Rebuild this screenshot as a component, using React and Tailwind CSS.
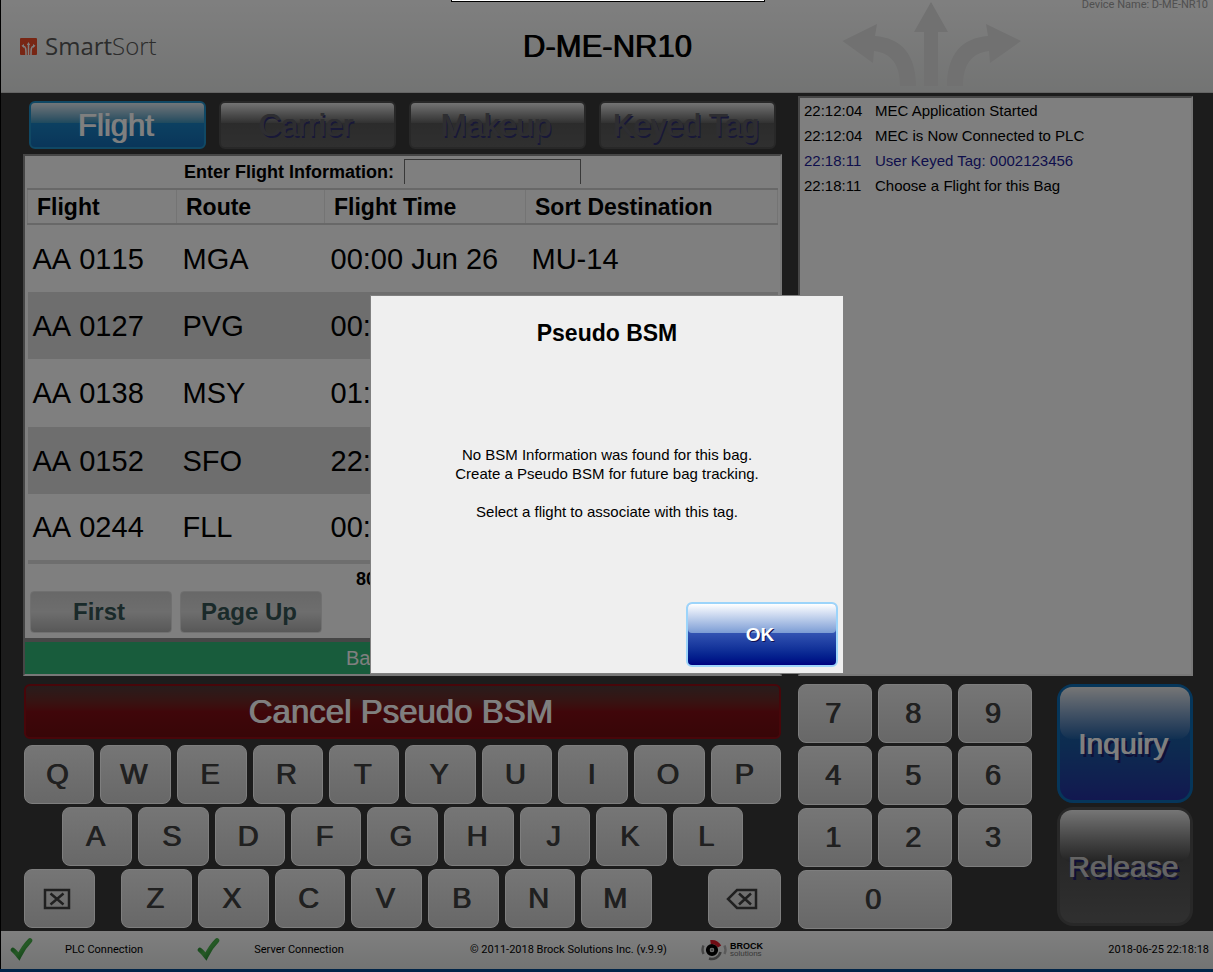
import React from "react";

const FAUX = "[text-shadow:1px_0_0_currentColor]";

const flights = [
  { flight: "AA 0115", route: "MGA", time: "00:00 Jun 26", dest: "MU-14" },
  { flight: "AA 0127", route: "PVG", time: "00:", dest: "" },
  { flight: "AA 0138", route: "MSY", time: "01:", dest: "" },
  { flight: "AA 0152", route: "SFO", time: "22:", dest: "" },
  { flight: "AA 0244", route: "FLL", time: "00:", dest: "" },
];

const log = [
  { time: "22:12:04", text: "MEC Application Started" },
  { time: "22:12:04", text: "MEC is Now Connected to PLC" },
  { time: "22:18:11", text: "User Keyed Tag: 0002123456", user: true },
  { time: "22:18:11", text: "Choose a Flight for this Bag" },
];

function Tab({ label, active }) {
  return (
    <button
      type="button"
      disabled={!active}
      className={
        "relative h-12 flex-1 rounded-md border-2 pr-1 text-[31px] leading-none " +
        (active
          ? "border-[#2090c8] bg-linear-to-b from-[#1e94d0] to-[#146cb4] text-white [text-shadow:1px_0_0_currentColor]"
          : "border-[#505050] bg-linear-to-b from-[#505050] to-[#606060] text-[#5c5c62] [text-shadow:1px_0_0_currentColor,2px_2px_0_#303070]")
      }
    >
      <span
        className={
          "absolute inset-x-0 top-0 h-5 rounded-t-sm bg-linear-to-b " +
          (active ? "from-[#e4ecf2] to-[#3c94bc]" : "from-[#e8e8e8] to-[#646464]")
        }
      />
      <span className="relative">{label}</span>
    </button>
  );
}

function Key({ children, label, className = "flex-1" }) {
  return (
    <button
      type="button"
      aria-label={label}
      className={
        "flex h-[59px] min-w-0 items-center justify-center rounded-lg border border-[#fdfdfd] bg-linear-to-b from-[#ececec] to-[#d0d0d0] pr-1 text-[29px] leading-none text-[#404040] " +
        FAUX +
        " " +
        className
      }
    >
      {children}
    </button>
  );
}

function ActionButton({ label, active }) {
  return (
    <button
      type="button"
      disabled={!active}
      className={
        "relative h-[119px] w-full rounded-2xl border-[3px] pr-1 text-[30px] leading-none " +
        (active
          ? "border-[#0c6cb4] bg-linear-to-b from-[#1470b8] via-[#1a58a0] to-[#2430a0] text-white [text-shadow:1px_0_0_currentColor,3px_3px_0_#202070]"
          : "border-[#505050] bg-linear-to-b from-[#444444] to-[#606060] text-[#c8c8c8] [text-shadow:1px_0_0_currentColor,3px_3px_0_#202070]")
      }
    >
      <span
        className={
          "absolute inset-x-0 top-0 h-[52px] rounded-xl bg-linear-to-b " +
          (active ? "from-[#ececec] to-[#2060a4]" : "from-[#ececec] to-[#484848]")
        }
      />
      <span className="relative">{label}</span>
    </button>
  );
}

function CheckMark({ id }) {
  return (
    <svg width="24" height="24" viewBox="0 0 24 24" aria-hidden="true">
      <defs>
        <linearGradient id={id} x1="0" y1="0" x2="1" y2="1">
          <stop offset="0" stopColor="#187828" />
          <stop offset="0.5" stopColor="#4cb44c" />
          <stop offset="1" stopColor="#187828" />
        </linearGradient>
      </defs>
      <path d="M4 12 C6 13.500 8 16 10 18.500 C12.500 13 16 7.500 21 2.500" fill="none" stroke={`url(#${id})`} strokeWidth="4.6" strokeLinecap="round" />
    </svg>
  );
}

function BrockMark() {
  return (
    <svg width="28" height="22" viewBox="0 0 28 22" aria-hidden="true">
      <circle cx="11" cy="11" r="4.2" fill="none" stroke="#000" strokeWidth="3.8" />
      <circle cx="11" cy="11" r="1.4" fill="#8c8c8c" />
      <path d="M9.500 3 A9 9 0 0 1 18.500 7.500" fill="none" stroke="#e01828" strokeWidth="4" />
      <path d="M19.500 13 A9 9 0 0 1 8 19.500" fill="none" stroke="#787878" strokeWidth="2.6" />
      <path d="M2.500 6.500 A10 10 0 0 0 2.500 15" fill="none" stroke="#8c8c8c" strokeWidth="2.4" />
      <path d="M23.500 6.500 A10 10 0 0 1 23.500 15" fill="none" stroke="#b4b4b4" strokeWidth="2.4" />
    </svg>
  );
}

function Header() {
  return (
    <header className="relative grid h-[93px] grid-cols-3 items-center border-b border-[#c8c8c8] bg-linear-to-b from-white to-[#e6e8e7]">
      <div className="flex items-center gap-2 pl-[19px]">
        <svg width="17" height="17" viewBox="0 0 17 17" aria-hidden="true">
          <rect width="17" height="17" rx="1" fill="#f04c28" />
          <path
            d="M8.500 17 V6 M6 17 C6 11 6 8.500 3 8 M11 17 C11 11 11 8.500 14 8"
            fill="none"
            stroke="#fff"
            strokeWidth="1.5"
          />
          <path d="M6.800 7 L8.500 4 L10.200 7 Z M4 6 L1.500 7.800 L4 10 Z M13 6 L15.500 7.800 L13 10 Z" fill="#fff" />
        </svg>
        <span className="font-['Open_Sans'] text-2xl leading-8 text-[#585858]">
          Smart<span className="font-light">Sort</span>
        </span>
      </div>
      <h1 className={"text-center text-[31px] leading-none text-black " + FAUX}>D-ME-NR10</h1>
      <div className="h-full pl-8">
        <svg width="180" height="92" viewBox="0 0 180 92" aria-hidden="true">
          <g fill="#e2e2e2">
            <path d="M90 2 L107 32 H97 V86 H83 V32 H73 Z" />
            <path d="M1.500 41 L36 24 L34 36 C60 38 75 54 75 86 H59 C59 64 50 53 33 51 L32 63 Z" />
            <path d="M180 41 L145 24 L147 36 C121 38 106 54 106 86 H122 C122 64 131 53 148 51 L149 63 Z" />
          </g>
        </svg>
      </div>
      <p className="absolute right-[5px] top-0 font-[Roboto,sans-serif] text-[11px] leading-[10px] text-[#a0a0a0]">
        Device Name: D-ME-NR10
      </p>
    </header>
  );
}

function FlightPanel() {
  return (
    <section className="mt-[5px] border-2 border-[#8c8c8c] border-r-[#f0f0f0] bg-white px-0.5">
      <div className="flex h-8 items-end justify-start pl-[157px]">
        <label htmlFor="flight-info" className="pb-1 text-lg font-bold leading-6 text-black">
          Enter Flight Information:
        </label>
        <input
          id="flight-info"
          className="mb-1 ml-2.5 h-[25px] w-[177px] border border-b-0 border-[#707070] bg-white px-1 text-base"
        />
      </div>
      <table className="w-full table-fixed border-collapse text-left text-black">
        <colgroup>
          <col className="w-[149px]" />
          <col className="w-[148px]" />
          <col className="w-[201px]" />
          <col />
        </colgroup>
        <thead>
          <tr className="h-[35px] border-y-2 border-[#d0d0d0] text-[23px] leading-6">
            <th className="border-x border-[#e8e8e8] pl-[9px]">Flight</th>
            <th className="border-x border-[#e8e8e8] pl-[9px]">Route</th>
            <th className="border-x border-[#e8e8e8] pl-[9px]">Flight Time</th>
            <th className="border-x border-[#e8e8e8] pl-[9px]">Sort Destination</th>
          </tr>
        </thead>
        <tbody className="border-b-4 border-[#dcdcdc] [font-kerning:none]">
          {flights.map((f) => (
            <tr key={f.flight} className="text-[29px] leading-8 odd:h-[68px] even:h-[67px] even:bg-[#dcdcdc]">
              <td className="pl-[5px]">{f.flight}</td>
              <td className="pl-[6px]">{f.route}</td>
              <td className="whitespace-nowrap pl-[6px]">{f.time}</td>
              <td className="pl-[6px]">{f.dest}</td>
            </tr>
          ))}
        </tbody>
      </table>
      <p className="pl-[329px] pt-[3px] text-lg font-bold leading-6 text-black">80</p>
      <div className="flex gap-2 px-[3px] pb-[5px]">
        {["First", "Page Up"].map((label) => (
          <button
            key={label}
            type="button"
            className="h-[42px] w-[142px] rounded-sm border border-[#e0e0e0] bg-linear-to-b from-[#d0d0d0] via-[#dcdcdc] to-[#b0b0b0] pr-1 text-2xl font-bold leading-none text-[#345454]"
          >
            {label}
          </button>
        ))}
      </div>
    </section>
  );
}

function Keyboard() {
  return (
    <div className="flex flex-col gap-[3px]">
      <div className="flex gap-1.5">
        {[..."QWERTYUIOP"].map((k) => (
          <Key key={k}>{k}</Key>
        ))}
      </div>
      <div className="flex gap-1.5 px-[38px]">
        {[..."ASDFGHJKL"].map((k) => (
          <Key key={k}>{k}</Key>
        ))}
      </div>
      <div className="flex gap-1.5">
        <Key label="Clear" className="flex-[70]">
          <svg width="28" height="22" viewBox="0 0 28 22" fill="none" stroke="#404040" strokeWidth="2.5" aria-hidden="true">
            <rect x="2" y="2" width="24" height="18" />
            <path d="M7.500 5.500 L20.500 16.500 M20.500 5.500 L7.500 16.500" />
          </svg>
        </Key>
        <span className="flex-[16]" />
        {[..."ZXCVBNM"].map((k) => (
          <Key key={k} className="flex-[70]">
            {k}
          </Key>
        ))}
        <span className="flex-[47]" />
        <Key label="Backspace" className="flex-[73]">
          <svg width="32" height="22" viewBox="0 0 32 22" fill="none" stroke="#404040" strokeWidth="2.5" aria-hidden="true">
            <path d="M11 2 H30 V20 H11 L2 11 Z" />
            <path d="M13 5.500 L25 16.500 M25 5.500 L13 16.500" />
          </svg>
        </Key>
      </div>
    </div>
  );
}

function Footer() {
  return (
    <footer className="grid h-[38px] grid-cols-[469fr_293fr_450fr] items-center whitespace-nowrap bg-linear-to-b from-white to-[#e6e8e7] font-[Roboto,sans-serif] text-[11px] leading-4 text-black">
      <div className="flex items-center pl-2">
        <CheckMark id="plc-check" />
        <span className="ml-8">PLC Connection</span>
        <span className="ml-[53px] flex">
          <CheckMark id="server-check" />
        </span>
        <span className="ml-[34px]">Server Connection</span>
      </div>
      <div className="flex items-center justify-between">
        <span>© 2011-2018 Brock Solutions Inc. (v.9.9)</span>
        <span className="flex items-center gap-px">
          <BrockMark />
          <span className="flex flex-col font-['Liberation_Sans'] leading-2">
            <span className="text-[9px] font-bold">BROCK</span>
            <span className="text-[8px] text-[#707070]">solutions</span>
          </span>
        </span>
      </div>
      <span className="pr-1 text-right">2018-06-25 22:18:18</span>
    </footer>
  );
}

function Dialog() {
  return (
    <div className="absolute inset-0 flex items-center justify-center bg-black/50">
      <div
        role="dialog"
        aria-modal="true"
        aria-labelledby="dialog-title"
        className="flex h-[379px] w-[474px] flex-col items-center border border-[#808080] bg-[#efefef] text-black"
      >
        <h2 id="dialog-title" className="mt-[23px] text-[23px] font-bold leading-7">
          Pseudo BSM
        </h2>
        <p className="mt-[98px] whitespace-pre-line text-center text-[15px] leading-[19px]">
          {"No BSM Information was found for this bag.\nCreate a Pseudo BSM for future bag tracking.\n\nSelect a flight to associate with this tag."}
        </p>
        <button
          type="button"
          className="relative mb-1.5 mr-[5px] mt-auto h-[65px] w-[152px] self-end rounded-md border-2 border-[#9cd4fa] bg-linear-to-b from-[#5c90d8] via-[#3050b0] to-[#000080] pr-1 text-[19px] font-bold leading-none text-white [text-shadow:1px_1px_0_#101050]"
        >
          <span className="absolute inset-x-0 top-0 h-[29px] rounded-sm bg-linear-to-b from-white to-[#7c9cd4]" />
          <span className="relative">OK</span>
        </button>
      </div>
    </div>
  );
}

export default function App() {
  return (
    <div className="flex min-h-screen flex-col bg-[#002448] font-['Liberation_Sans',Arial,sans-serif]">
      <div className="relative flex flex-1 flex-col border-l border-black bg-[#383838]">
        <Header />
        <main className="grid flex-1 grid-cols-[759fr_395fr] grid-rows-[auto_1fr] gap-x-4 pl-[22px] pr-5">
          <div className="pt-2">
            <div className="flex gap-[13px] px-1.5">
              <Tab label="Flight" active />
              <Tab label="Carrier" />
              <Tab label="Makeup" />
              <Tab label="Keyed Tag" />
            </div>
            <FlightPanel />
            <div className="border-2 border-[#8c8c8c] border-b-[#f0f0f0] bg-[#30b878] pl-[321px] text-xl leading-8 text-white">
              Bag
            </div>
          </div>
          <ul className="mt-[3px] border-2 border-[#8c8c8c] border-b-[#f0f0f0] border-r-[#f0f0f0] bg-white pl-1 text-[15px] leading-[25px] text-black">
            {log.map((entry) => (
              <li key={entry.text} className={entry.user ? "flex text-[#1c1c98]" : "flex"}>
                <span className="w-[71px]">{entry.time}</span>
                <span>{entry.text}</span>
              </li>
            ))}
          </ul>
          <div className="flex flex-col gap-1.5 px-px pt-2">
            <button
              type="button"
              className={
                "h-[55px] rounded-md border-2 border-[#900c14] bg-linear-to-b from-[#503838] via-[#800c14] to-[#700c10] pr-1 text-[33px] leading-none text-white " +
                FAUX
              }
            >
              Cancel Pseudo BSM
            </button>
            <Keyboard />
          </div>
          <div className="grid grid-cols-[233fr_136fr] gap-x-[25px] pt-2">
            <div className="grid auto-rows-min grid-cols-3 gap-x-1.5 gap-y-[3px]">
              {["7", "8", "9", "4", "5", "6", "1", "2", "3"].map((n) => (
                <Key key={n}>{n}</Key>
              ))}
              <Key className="col-span-2">0</Key>
            </div>
            <div className="flex flex-col gap-1">
              <ActionButton label="Inquiry" active />
              <ActionButton label="Release" />
            </div>
          </div>
        </main>
        <Footer />
        <Dialog />
        <div className="absolute left-[450px] top-0 h-0.5 w-[314px] border border-t-0 border-black bg-white" />
      </div>
      <div className="h-[3px]" />
    </div>
  );
}
